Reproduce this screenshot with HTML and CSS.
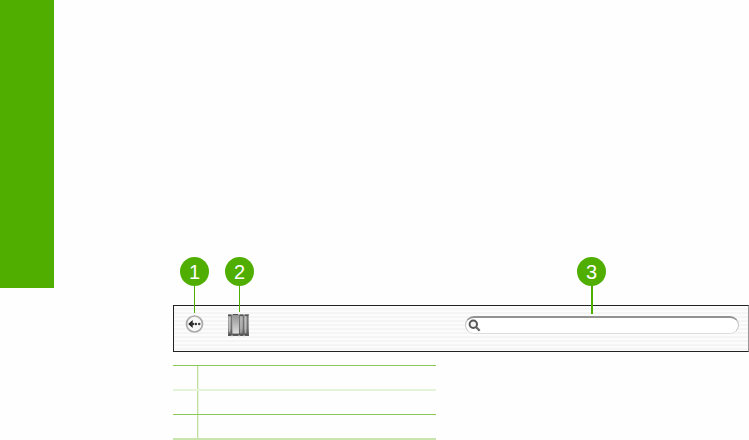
FILE: index.html
```
<!DOCTYPE html>
<html lang="en">
<head>
    <meta charset="UTF-8">
    <title>Toolbar</title>
    <link rel="stylesheet" href="styles.css">
</head>
<body>
    <div class="page">
        <div class="side-tab"></div>
        <div class="content">
            <div class="toolbar">
                <div class="tool back">
                    <span class="callout">1</span>
                    <svg width="20" height="20" viewBox="0 0 20 20">
                        <circle cx="9.500" cy="10" r="8" fill="#f7f7f7" stroke="#aaa" stroke-width="1.700"/>
                        <path d="M3.200 10l4.500-4v8z" fill="#222"/>
                        <path d="M6 10h3" stroke="#333" stroke-width="2.200"/>
                        <circle cx="10.800" cy="10" r="1.300" fill="#333"/>
                        <circle cx="14.200" cy="10" r="1.300" fill="#444"/>
                    </svg>
                </div>
                <div class="tool books">
                    <span class="callout">2</span>
                    <svg width="21" height="23" viewBox="0 0 21 23">
                        <defs>
                            <linearGradient id="shade" x1="0" y1="0" x2="0" y2="1">
                                <stop offset="0" stop-color="#888"/>
                                <stop offset=".2" stop-color="#aaa"/>
                                <stop offset=".65" stop-color="#999"/>
                                <stop offset="1" stop-color="#555"/>
                            </linearGradient>
                            <linearGradient id="page" x1="0" y1="0" x2="0" y2="1">
                                <stop offset="0" stop-color="#999"/>
                                <stop offset="1" stop-color="#ddd"/>
                            </linearGradient>
                        </defs>
                        <path d="M0 0h21v22H0z" fill="url(#shade)"/>
                        <path d="M4.500 2.500h6.500v17H4.500z" fill="url(#page)"/>
                        <path d="M13 2v17M17.500 2v17M1.500 3v15" stroke="#ccc" opacity=".7"/>
                        <path d="M3.500 1v20M11.500 1v20M15.500 1v20M19.500 2v18" stroke="#555" opacity=".6"/>
                        <path d="M0 1.500h3M5 .5h5M12 1.500h3M17 1.500h3M0 20.500h3M5 20.500h6M13 20.500h2M17 20.500h3" stroke="#555"/>
                        <path d="M3 22h2M10 22h2M15 22h2M3 0h2M10 0h2M15 0h2" stroke="#ddd"/>
                    </svg>
                </div>
                <div class="search">
                    <span class="callout">3</span>
                    <svg width="15" height="15" viewBox="0 0 15 15">
                        <circle cx="5.300" cy="5.200" r="3.700" fill="#f4f4f4" stroke="#555" stroke-width="2"/>
                        <path d="M8 8l3.700 3.700" stroke="#666" stroke-width="2.200"/>
                    </svg>
                </div>
            </div>
            <table class="legend">
                <tr class="first"><td class="num"></td><td></td></tr>
                <tr class="second"><td class="num"></td><td></td></tr>
                <tr class="third"><td class="num"></td><td></td></tr>
            </table>
        </div>
    </div>
</body>
</html>
```

FILE: styles.css
```
* { box-sizing: border-box; }
body { margin: 0; background: #fefefe; font-family: Arial, "Liberation Sans", sans-serif; overflow: hidden; }
.page { display: flex; width: 749px; height: 440px; }
.side-tab { width: 54px; height: 288px; background: #4fae00; }
.content { width: 576px; margin-left: 119px; padding-top: 305px; }

.toolbar { display: flex; width: 576px; height: 47px; padding: 0 9px 0 11px; border: 1px solid #222; border-right-color: #999; background: repeating-linear-gradient(#fcfcfc 0 2px, #f5f5f5 2px 4px); }
.tool { position: relative; height: 23px; }
.tool svg, .search svg { display: block; }
.back { width: 20px; margin-top: 8px; }
.books { width: 21px; margin: 8px 0 0 23px; }
.search { position: relative; width: 274px; height: 18px; margin: 10px 0 0 auto; padding: 1px 0 0 2px; border: 1px solid #c4c4c4; border-top: 2px solid #929292; border-bottom-color: #ddd; border-radius: 9px; background: #fff; }

.callout { position: absolute; top: -57px; left: -5px; width: 29px; height: 29px; border-radius: 50%; background: #4fae00; color: #fff; font-size: 20px; line-height: 30px; text-align: center; }
.callout::after { content: ""; position: absolute; top: 28px; left: 14px; width: 1px; height: 28px; background: #4fae00; }
.books .callout { left: -3px; }
.books .callout::after { height: 27px; }
.search .callout { top: -61px; left: 111px; }
.search .callout::after { width: 2px; height: 29px; }

.legend { width: 263px; margin-top: 13px; border-collapse: separate; border-spacing: 0; }
.legend td { padding: 0; }
.num { width: 26px; background: linear-gradient(to right, #bfe09f 1px, #e8f5dc 1px) right / 2px 100% no-repeat; }
.first td { height: 26px; border-top: 1px solid #8cc856; border-bottom: 2px solid #e5f3d8; }
.second td { height: 24px; border-bottom: 1px solid #8cc856; }
.third td { height: 25px; border-bottom: 2px solid #c8e5ad; }
```
